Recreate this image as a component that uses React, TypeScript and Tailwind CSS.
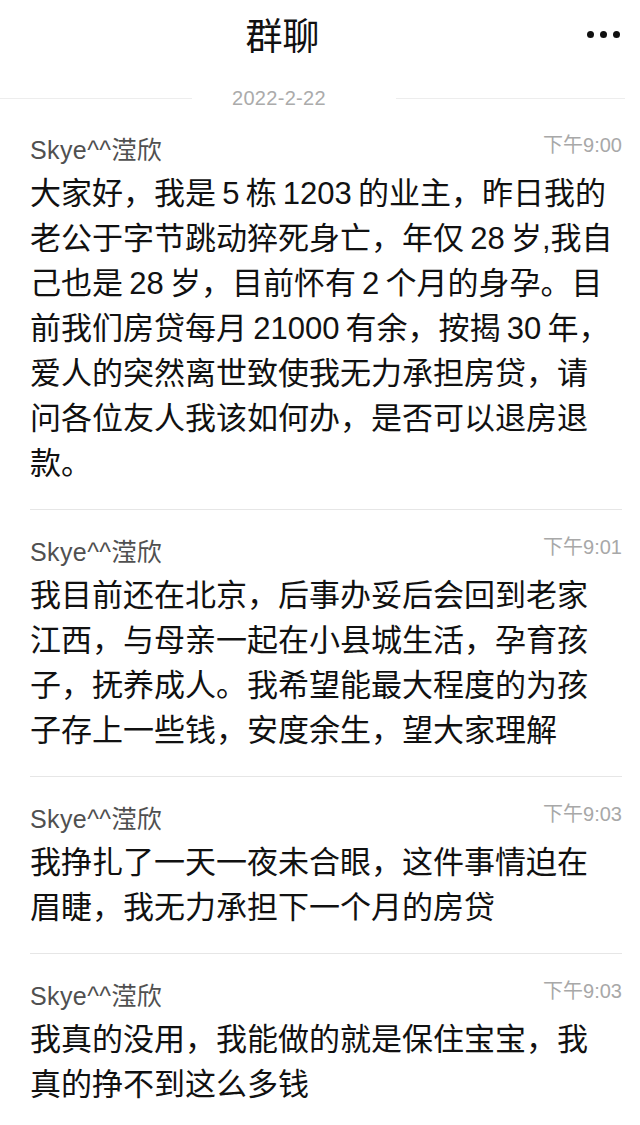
import React from "react";

type Msg = { time: string; lines: string[] };

const T = "\u2009";

const messages: Msg[] = [
  {
    time: "下午9:00",
    lines: [
      `大家好，我是${T}5${T}栋${T}1203${T}的业主，昨日我的`,
      `老公于字节跳动猝死身亡，年仅${T}28${T}岁,我自`,
      `己也是${T}28${T}岁，目前怀有${T}2${T}个月的身孕。目`,
      `前我们房贷每月${T}21000${T}有余，按揭${T}30${T}年，`,
      "爱人的突然离世致使我无力承担房贷，请",
      "问各位友人我该如何办，是否可以退房退",
      "款。",
    ],
  },
  {
    time: "下午9:01",
    lines: [
      "我目前还在北京，后事办妥后会回到老家",
      "江西，与母亲一起在小县城生活，孕育孩",
      "子，抚养成人。我希望能最大程度的为孩",
      "子存上一些钱，安度余生，望大家理解",
    ],
  },
  {
    time: "下午9:03",
    lines: ["我挣扎了一天一夜未合眼，这件事情迫在", "眉睫，我无力承担下一个月的房贷"],
  },
  {
    time: "下午9:03",
    lines: ["我真的没用，我能做的就是保住宝宝，我", "真的挣不到这么多钱"],
  },
];

export default function App() {
  return (
    <div className="w-[640px] min-h-[1125px] bg-white font-['Liberation_Sans','Noto_Sans_CJK_SC',sans-serif]">
      <header className="flex h-[68px] items-center pr-[20px]">
        <div className="flex-1 pr-[22px] text-center text-[37px] font-normal leading-none text-[#111] font-['Noto_Sans_CJK_SC',sans-serif]">
          群聊
        </div>
        <div className="flex items-center gap-[6px]">
          <span className="h-[7px] w-[7px] rounded-full bg-[#111]" />
          <span className="h-[7px] w-[7px] rounded-full bg-[#111]" />
          <span className="h-[7px] w-[7px] rounded-full bg-[#111]" />
        </div>
      </header>

      <div className="flex h-[60px] items-center">
        <div className="h-px w-[192px] bg-[#ededed]" />
        <div className="ml-[40px] mr-[70px] text-[20px] leading-none tracking-[0.3px] text-[#ababab]">2022-2-22</div>
        <div className="mr-[15px] h-px flex-1 bg-[#ededed]" />
      </div>

      <div className="pl-[30px] pr-[18px]">
        {messages.map((m, i) => (
          <div
            key={i}
            className={`${i === 0 ? "pt-[6px]" : "pt-[26px]"} ${
              i < messages.length - 1 ? "border-b border-[#e6e6e6] pb-[23px]" : "pb-[20px]"
            }`}
          >
            <div className="flex h-[32px] items-start justify-between">
              <span className="text-[25px] leading-[32px] tracking-[0.4px] text-[#505050]">Skye^^滢欣</span>
              <span className="text-[20px] leading-[22px] text-[#a8a8a8]">{m.time}</span>
            </div>
            <div className="mt-[5px] text-[31px] leading-[45px] text-[#111]">
              {m.lines.map((l, j) => (
                <div key={j} className="whitespace-nowrap">
                  {l}
                </div>
              ))}
            </div>
          </div>
        ))}
      </div>
    </div>
  );
}
